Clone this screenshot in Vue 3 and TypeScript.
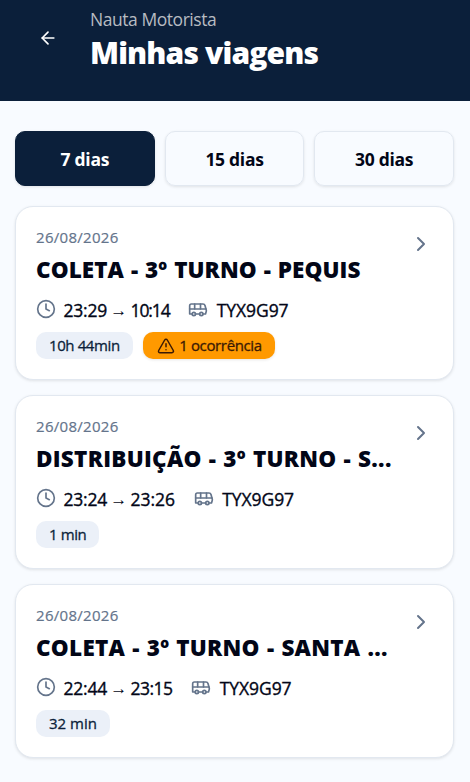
<script setup lang="ts">
import { ref } from 'vue'

interface Trip {
  date: string
  title: string
  titleSpacing: number
  start: string
  end: string
  endSpacing: number
  plate: string
  duration: string
  durationSpacing: number
  incidents?: string
}

const periods = ['7 dias', '15 dias', '30 dias']
const selected = ref('7 dias')

const trips: Trip[] = [
  { date: '26/08/2026', title: 'COLETA - 3º TURNO - PEQUIS', titleSpacing: 0.07, start: '23:29', end: '10:14', endSpacing: -1.1, plate: 'TYX9G97', duration: '10h 44min', durationSpacing: -0.4, incidents: '1 ocorrência' },
  { date: '26/08/2026', title: 'DISTRIBUIÇÃO - 3º TURNO - S...', titleSpacing: 0.26, start: '23:24', end: '23:26', endSpacing: 0, plate: 'TYX9G97', duration: '1 min', durationSpacing: -0.4 },
  { date: '26/08/2026', title: 'COLETA - 3º TURNO - SANTA ...', titleSpacing: 0.25, start: '22:44', end: '23:15', endSpacing: -0.5, plate: 'TYX9G97', duration: '32 min', durationSpacing: 0 },
]
</script>

<template>
  <div class="page">
    <header class="header">
      <button class="back" aria-label="Voltar">
        <svg class="icon icon-md" viewBox="0 0 24 24"><path d="m12 19-7-7 7-7" /><path d="M19 12H5" /></svg>
      </button>
      <div class="heading">
        <p class="app-name">Nauta Motorista</p>
        <h1>Minhas viagens</h1>
      </div>
    </header>

    <main class="content">
      <nav class="periods">
        <button v-for="p in periods" :key="p" class="period" :class="{ active: p === selected }" @click="selected = p">{{ p }}</button>
      </nav>

      <section class="trips">
        <article v-for="(trip, i) in trips" :key="i" class="card">
          <div class="body">
            <p class="date">{{ trip.date }}</p>
            <h2 class="title" :style="{ letterSpacing: trip.titleSpacing + 'px' }">{{ trip.title }}</h2>
            <div class="meta">
              <svg class="icon icon-md muted" viewBox="0 0 24 24"><circle cx="12" cy="12" r="10" /><path d="M12 6v6l4 2" /></svg>
              <span class="times">
                <span class="start">{{ trip.start }}</span>
                <span class="arrow">→</span>
                <span :style="{ letterSpacing: trip.endSpacing + 'px' }">{{ trip.end }}</span>
              </span>
              <svg class="icon icon-md muted" viewBox="0 0 24 24">
                <path d="M8 6v6" /><path d="M15 6v6" /><path d="M2 12h19.6" />
                <path d="M18 18h3s.5-1.7.8-2.8c.1-.4.2-.8.2-1.2 0-.4-.1-.8-.2-1.2l-1.4-5C20.1 6.8 19.1 6 18 6H4a2 2 0 0 0-2 2v10h3" />
                <circle cx="7" cy="18" r="2" /><path d="M9 18h5" /><circle cx="16" cy="18" r="2" />
              </svg>
              <span class="plate">{{ trip.plate }}</span>
            </div>
            <div class="chips">
              <span class="chip" :style="{ letterSpacing: trip.durationSpacing + 'px' }">{{ trip.duration }}</span>
              <span v-if="trip.incidents" class="chip warning">
                <svg class="icon icon-sm" viewBox="0 0 24 24">
                  <path d="m21.73 18-8-14a2 2 0 0 0-3.48 0l-8 14A2 2 0 0 0 4 21h16a2 2 0 0 0 1.73-3" />
                  <path d="M12 9v4" /><path d="M12 17h.01" />
                </svg>
                {{ trip.incidents }}
              </span>
            </div>
          </div>
          <svg class="icon chevron muted" viewBox="0 0 24 24"><path d="m9 18 6-6-6-6" /></svg>
        </article>
      </section>
    </main>
  </div>
</template>

<style>
body { background: #f8fbff; }
</style>

<style scoped>
.page {
  min-height: 782px;
  background: #f8fbff;
  color: #020617;
  font-family: "Open Sans", "Noto Sans", sans-serif;
}
p, h1, h2 { margin: 0; }
button { font: inherit; border: 0; background: none; padding: 0; }
.icon { fill: none; stroke: currentColor; stroke-width: 2; stroke-linecap: round; stroke-linejoin: round; flex: none; display: block; }
.icon-md { width: 20px; height: 20px; }
.icon-sm { width: 18px; height: 18px; }
.muted { color: #64748b; }

.header { display: flex; align-items: flex-start; height: 101px; background: #0b1f3a; color: #fff; box-sizing: border-box; padding: 8px 16px 0; }
.back { width: 64px; height: 60px; display: grid; place-items: center; color: #fff; }
.heading { margin-left: 10px; }
.app-name { font-size: 17.5px; line-height: 23px; letter-spacing: -0.45px; color: #b7bbc1; }
h1 { margin-top: 2px; font-size: 30px; line-height: 39px; font-weight: 800; letter-spacing: -0.85px; white-space: nowrap; }

.content { padding: 30px 16px 24px 15px; }
.periods { display: grid; grid-template-columns: repeat(3, 1fr); gap: 10px; }
.period { height: 55px; border: 1px solid #e2e8f0; border-radius: 10px; font-size: 17.5px; font-weight: 700; letter-spacing: -0.3px; color: #020617; box-shadow: 0 1px 3px rgb(0 0 0 / 0.1); }
.period.active { background: #0b1f3a; border-color: #0b1f3a; color: #fff; }

.trips { display: grid; gap: 15px; margin-top: 20px; }
.card { display: flex; justify-content: space-between; height: 174px; box-sizing: border-box; padding: 20px; background: #fff; border: 1px solid #e2e8f0; border-radius: 18px; box-shadow: 0 1px 3px rgb(0 0 0 / 0.1); }
.body { min-width: 0; }
.chevron { width: 24px; height: 24px; margin: 5px 0.5px 0 0; }
.date { font-size: 15px; line-height: 20px; letter-spacing: 0.3px; color: #64748b; -webkit-text-stroke: 0.2px currentColor; }
.title { margin-top: 5px; font-size: 22.5px; line-height: 35px; font-weight: 800; word-spacing: 1px; white-space: nowrap; }
.meta { display: flex; align-items: center; height: 25px; margin-top: 10px; font-size: 17.5px; -webkit-text-stroke: 0.35px currentColor; }
.meta .icon { position: relative; top: -0.5px; }
.times { display: flex; align-items: center; margin: 0 18.5px 0 7.5px; }
.start { letter-spacing: -0.2px; }
.arrow { width: 16px; margin: 2px 3.7px 0; font: 17px/20px "Liberation Sans", sans-serif; -webkit-text-stroke: 0; text-indent: -0.5px; }
.plate { margin-left: 8.5px; letter-spacing: -0.05px; }
.chips { display: flex; gap: 10px; margin-top: 10px; }
.chip { display: flex; align-items: center; height: 27px; box-sizing: border-box; padding: 0 13px 1px; border-radius: 10px; background: #ebf0f8; color: #0b1f3a; font-size: 15px; white-space: nowrap; -webkit-text-stroke: 0.3px currentColor; }
.chip.warning { gap: 4.5px; padding-left: 14px; background: #ff9900; color: #3b1a05; letter-spacing: -0.36px; box-shadow: 0 1px 3px rgb(0 0 0 / 0.1); }
.chip .icon { position: relative; top: 0.5px; }
</style>
